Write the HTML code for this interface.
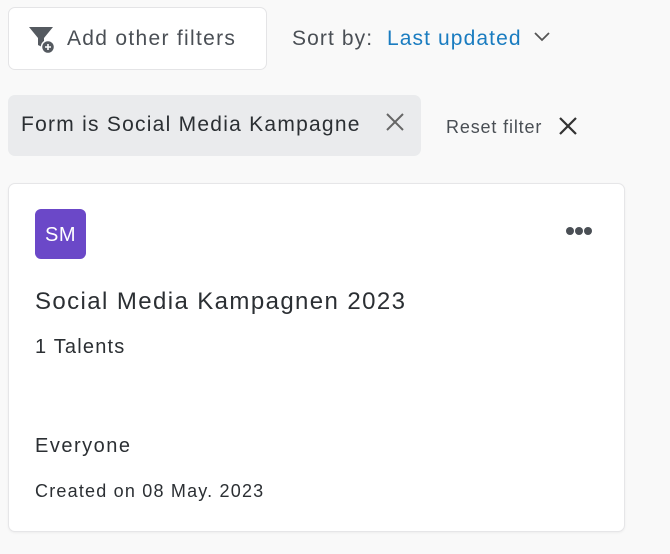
<!DOCTYPE html>
<html><head><style>
body{margin:0;width:670px;height:554px;background:#f9f9f9;font-family:"Liberation Sans",sans-serif;position:relative;overflow:hidden;color:#2b2f33}
.a{position:absolute;white-space:nowrap}
</style></head><body>
<div class="a" style="left:8px;top:7px;width:257px;height:61px;background:#fff;border:1px solid #e4e4e6;border-radius:7px"></div>
<svg class="a" style="left:28px;top:26px" width="30" height="28" viewBox="0 0 30 28"><path d="M1 1H25L16 12V22L10 19V12Z" fill="#555a60"/><circle cx="20" cy="21" r="6.5" fill="#555a60" stroke="#fff" stroke-width="1.5"/><path d="M17 21H23M20 18V24" stroke="#fff" stroke-width="1.6"/></svg>
<div class="a" style="left:67px;top:27px;font-size:21px;letter-spacing:1.3px;color:#4a4f55">Add other filters</div>
<div class="a" style="left:292px;top:27px;font-size:21px;letter-spacing:1.1px;color:#4a4f55">Sort by:</div>
<div class="a" style="left:387px;top:27px;font-size:21px;letter-spacing:1.1px;color:#1a7cc0">Last updated</div>
<svg class="a" style="left:533px;top:31px" width="18" height="12"><path d="M2 2L9 9L16 2" fill="none" stroke="#555" stroke-width="1.8"/></svg>
<div class="a" style="left:8px;top:95px;width:413px;height:61px;background:#eaebed;border-radius:7px"></div>
<div class="a" style="left:21px;top:113px;font-size:21px;letter-spacing:1.25px;color:#2b2f33">Form is Social Media Kampagne</div>
<svg class="a" style="left:385px;top:112px" width="20" height="20"><path d="M2 2L18 18M18 2L2 18" stroke="#666" stroke-width="2"/></svg>
<div class="a" style="left:446px;top:117px;font-size:18px;letter-spacing:0.85px;color:#4a4f55">Reset filter</div>
<svg class="a" style="left:558px;top:116px" width="20" height="20"><path d="M2 2L18 18M18 2L2 18" stroke="#333" stroke-width="2.2"/></svg>
<div class="a" style="left:8px;top:183px;width:615px;height:347px;background:#fff;border:1px solid #e6e6e8;border-radius:7px;box-shadow:0 1px 2px rgba(0,0,0,.05)"></div>
<div class="a" style="left:35px;top:209px;width:51px;height:50px;background:#6b48c8;border-radius:6px;color:#fff;font-size:20px;line-height:52px;text-align:center;letter-spacing:0.5px">SM</div>
<svg class="a" style="left:565px;top:225px" width="28" height="12"><circle cx="5" cy="6" r="4" fill="#4a4f55"/><circle cx="14" cy="6" r="4" fill="#4a4f55"/><circle cx="23" cy="6" r="4" fill="#4a4f55"/></svg>
<div class="a" style="left:35px;top:288px;font-size:24px;letter-spacing:1.4px">Social Media Kampagnen 2023</div>
<div class="a" style="left:35px;top:336px;font-size:20px;letter-spacing:1.2px">1 Talents</div>
<div class="a" style="left:35px;top:435px;font-size:20px;letter-spacing:1.5px">Everyone</div>
<div class="a" style="left:35px;top:481px;font-size:18px;letter-spacing:1.2px">Created on 08 May. 2023</div>
</body></html>
